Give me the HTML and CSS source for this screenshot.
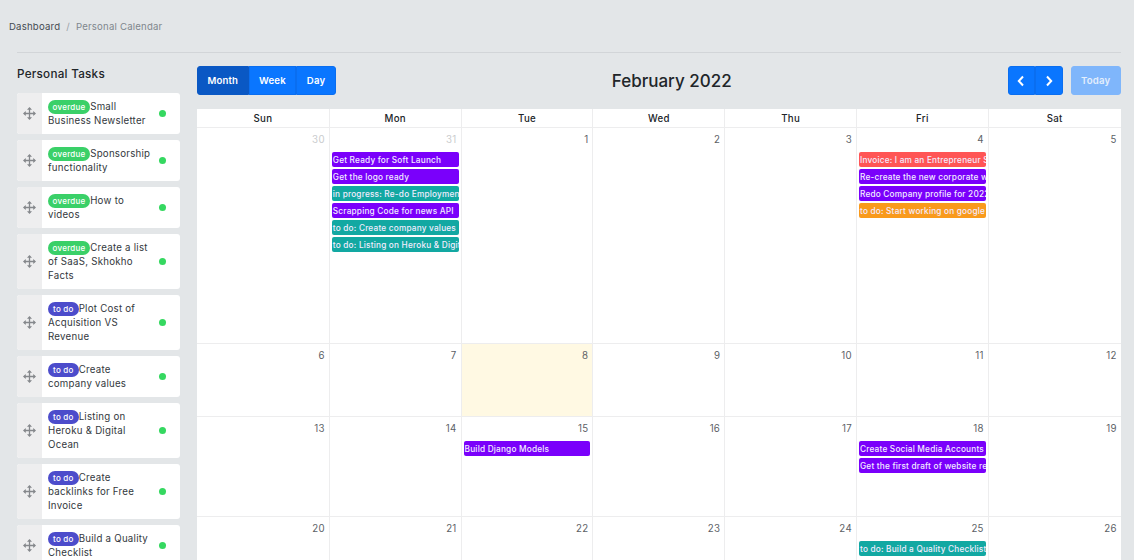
FILE: index.html
```html
<!DOCTYPE html>
<html>
<head>
  <title>Personal Calendar</title>
  <link rel="stylesheet" href="styles.css">
</head>
<body>
  <svg class="defs" width="0" height="0">
    <symbol id="move" viewBox="0 0 14 14">
      <path d="M7 1v12M1 7h12" fill="none" stroke="currentColor" stroke-width="1.4"/>
      <path d="M7 0l2.7 3H4.3zM7 14l2.7-3H4.3zM0 7l3-2.7v5.4zM14 7l-3-2.7v5.4z" fill="currentColor"/>
    </symbol>
  </svg>

  <nav class="breadcrumb">
    <a href="#">Dashboard</a>
    <span class="sep">/</span>
    <span class="current">Personal Calendar</span>
  </nav>

  <div class="content">
    <hr>
    <div class="columns">
      <aside class="tasks">
        <h2>Personal Tasks</h2>

        <div class="task">
          <div class="handle"><svg><use href="#move"/></svg></div>
          <div class="task-text"><span class="badge overdue">overdue</span>Small Business Newsletter</div>
          <span class="dot"></span>
        </div>
        <div class="task">
          <div class="handle"><svg><use href="#move"/></svg></div>
          <div class="task-text"><span class="badge overdue">overdue</span>Sponsorship functionality</div>
          <span class="dot"></span>
        </div>
        <div class="task">
          <div class="handle"><svg><use href="#move"/></svg></div>
          <div class="task-text"><span class="badge overdue">overdue</span>How to videos</div>
          <span class="dot"></span>
        </div>
        <div class="task">
          <div class="handle"><svg><use href="#move"/></svg></div>
          <div class="task-text"><span class="badge overdue">overdue</span>Create a list of SaaS, Skhokho Facts</div>
          <span class="dot"></span>
        </div>
        <div class="task">
          <div class="handle"><svg><use href="#move"/></svg></div>
          <div class="task-text"><span class="badge todo">to do</span>Plot Cost of Acquisition VS Revenue</div>
          <span class="dot"></span>
        </div>
        <div class="task">
          <div class="handle"><svg><use href="#move"/></svg></div>
          <div class="task-text"><span class="badge todo">to do</span>Create company values</div>
          <span class="dot"></span>
        </div>
        <div class="task">
          <div class="handle"><svg><use href="#move"/></svg></div>
          <div class="task-text"><span class="badge todo">to do</span>Listing on Heroku &amp; Digital Ocean</div>
          <span class="dot"></span>
        </div>
        <div class="task">
          <div class="handle"><svg><use href="#move"/></svg></div>
          <div class="task-text"><span class="badge todo">to do</span>Create backlinks for Free Invoice</div>
          <span class="dot"></span>
        </div>
        <div class="task">
          <div class="handle"><svg><use href="#move"/></svg></div>
          <div class="task-text"><span class="badge todo">to do</span>Build a Quality Checklist</div>
          <span class="dot"></span>
        </div>
      </aside>

      <main class="calendar">
        <div class="toolbar">
          <div class="btn-group">
            <button class="btn active">Month</button>
            <button class="btn">Week</button>
            <button class="btn">Day</button>
          </div>
          <h1>February 2022</h1>
          <div class="toolbar-right">
            <div class="btn-group">
              <button class="btn arrow"><svg width="8" height="12" viewBox="0 0 8 12"><path d="M6 1.5L1.8 6 6 10.5" fill="none" stroke="#fff" stroke-width="2"/></svg></button>
              <button class="btn arrow"><svg width="8" height="12" viewBox="0 0 8 12"><path d="M2 1.5L6.2 6 2 10.5" fill="none" stroke="#fff" stroke-width="2"/></svg></button>
            </div>
            <button class="btn today">Today</button>
          </div>
        </div>

        <div class="month">
          <div class="head">Sun</div>
          <div class="head">Mon</div>
          <div class="head">Tue</div>
          <div class="head">Wed</div>
          <div class="head">Thu</div>
          <div class="head">Fri</div>
          <div class="head">Sat</div>

          <div class="day other"><span class="num">30</span></div>
          <div class="day other"><span class="num">31</span>
            <a class="event purple">Get Ready for Soft Launch</a>
            <a class="event purple">Get the logo ready</a>
            <a class="event teal">in progress: Re-do Employment Contract</a>
            <a class="event purple">Scrapping Code for news API</a>
            <a class="event teal">to do: Create company values</a>
            <a class="event teal">to do: Listing on Heroku &amp; Digital Ocean</a>
          </div>
          <div class="day"><span class="num">1</span></div>
          <div class="day"><span class="num">2</span></div>
          <div class="day"><span class="num">3</span></div>
          <div class="day"><span class="num">4</span>
            <a class="event red">Invoice: I am an Entrepreneur Series</a>
            <a class="event purple">Re-create the new corporate website</a>
            <a class="event purple">Redo Company profile for 2022</a>
            <a class="event orange">to do: Start working on google ads</a>
          </div>
          <div class="day"><span class="num">5</span></div>

          <div class="day"><span class="num">6</span></div>
          <div class="day"><span class="num">7</span></div>
          <div class="day now"><span class="num">8</span></div>
          <div class="day"><span class="num">9</span></div>
          <div class="day"><span class="num">10</span></div>
          <div class="day"><span class="num">11</span></div>
          <div class="day"><span class="num">12</span></div>

          <div class="day"><span class="num">13</span></div>
          <div class="day"><span class="num">14</span></div>
          <div class="day"><span class="num">15</span>
            <a class="event purple">Build Django Models</a>
          </div>
          <div class="day"><span class="num">16</span></div>
          <div class="day"><span class="num">17</span></div>
          <div class="day"><span class="num">18</span>
            <a class="event purple">Create Social Media Accounts</a>
            <a class="event purple">Get the first draft of website ready</a>
          </div>
          <div class="day"><span class="num">19</span></div>

          <div class="day"><span class="num">20</span></div>
          <div class="day"><span class="num">21</span></div>
          <div class="day"><span class="num">22</span></div>
          <div class="day"><span class="num">23</span></div>
          <div class="day"><span class="num">24</span></div>
          <div class="day"><span class="num">25</span>
            <a class="event teal">to do: Build a Quality Checklist</a>
          </div>
          <div class="day"><span class="num">26</span></div>
        </div>
      </main>
    </div>
  </div>
</body>
</html>
```

FILE: styles.css
```css
html, body {
  height: 100%;
  overflow: hidden;
}
body {
  margin: 0;
  background: #e3e6e8;
  font-family: Inter, "Noto Sans", sans-serif;
  color: #2b2f33;
}
.defs {
  position: absolute;
}
.breadcrumb {
  height: 52px;
  padding-left: 9px;
  display: flex;
  align-items: center;
  gap: 6px;
  font-size: 9.6px;
  letter-spacing: 0.2px;
}
.breadcrumb a {
  color: #444b52;
  text-decoration: none;
}
.breadcrumb .sep {
  color: #9aa1a8;
}
.breadcrumb .current {
  color: #7f868d;
}
.content {
  padding: 0 13.3px 0 17px;
}
hr {
  margin: 0;
  border: 0;
  border-top: 1px solid #d2d5d8;
}
.columns {
  display: flex;
  gap: 17px;
  padding-top: 13px;
}

/* task list */
.tasks {
  width: 163px;
  flex: none;
}
.tasks h2 {
  margin: 0 0 11px;
  font-size: 11.7px;
  line-height: 16px;
  font-weight: 500;
  letter-spacing: 0.25px;
  color: #212529;
}
.task {
  display: flex;
  align-items: center;
  margin-bottom: 6px;
  background: #fff;
  border-radius: 3px;
  overflow: hidden;
}
.handle {
  width: 25px;
  align-self: stretch;
  flex: none;
  display: flex;
  align-items: center;
  justify-content: center;
  background: #eeeeef;
  color: #85888c;
}
.handle svg {
  width: 13px;
  height: 13px;
}
.task-text {
  flex: 1;
  padding: 6.5px 0 6.5px 6px;
  font-size: 9.7px;
  line-height: 14px;
  letter-spacing: 0.25px;
  color: #33383d;
}
.badge {
  display: inline-block;
  height: 14px;
  padding: 0 5px;
  border-radius: 7px;
  color: #fff;
  font-size: 8px;
  line-height: 14px;
  font-weight: 500;
  vertical-align: top;
}
.badge.overdue {
  padding: 0 4.6px;
  background: #3ad068;
}
.badge.todo {
  background: #4c4ccb;
}
.dot {
  width: 7px;
  height: 7px;
  margin: 0 14px 0 5px;
  border-radius: 50%;
  flex: none;
  background: #35d860;
}

/* calendar */
.calendar {
  flex: 1;
  min-width: 0;
}
.toolbar {
  display: flex;
  align-items: center;
  justify-content: space-between;
  height: 29px;
  margin-bottom: 14px;
}
.toolbar h1 {
  margin: 0;
  font-size: 17px;
  font-weight: 500;
  color: #212529;
}
.toolbar-right {
  display: flex;
  gap: 8px;
}
.btn-group {
  display: flex;
}
.btn {
  height: 29px;
  padding: 0 9.5px;
  border: 1px solid #0a6ef0;
  border-radius: 0;
  background: #0a76ff;
  color: #fff;
  font: 600 9.6px Inter, sans-serif;
  letter-spacing: 0.15px;
}
.btn-group .btn:first-child {
  border-radius: 3px 0 0 3px;
}
.btn-group .btn:last-child {
  border-radius: 0 3px 3px 0;
}
.btn.active {
  background: #0a58c4;
  border-color: #0a58c4;
}
.btn.arrow {
  width: 27.5px;
  padding: 0;
}
.btn.arrow svg {
  display: block;
  margin: auto;
}
.btn.today {
  width: 50px;
  padding: 0;
  border-color: #7fb6fb;
  border-radius: 3px;
  background: #7fb6fb;
  color: #e3eefc;
}
.month {
  display: grid;
  grid-template-columns: repeat(6, 131.8px) 1fr;
  grid-template-rows: 19px 216px 73px 100px 120px;
  background: #fff;
  font-size: 9.7px;
}
.head {
  text-align: center;
  font-weight: 500;
  line-height: 20px;
  letter-spacing: 0.3px;
  color: #212529;
  border-left: 1px solid #ededee;
  border-bottom: 1px solid #ededee;
}
.day {
  min-width: 0;
  padding: 0 1px;
  border-left: 1px solid #ededee;
  border-bottom: 1px solid #ededee;
}
.head:nth-child(7n+1), .day:nth-child(7n+1) {
  border-left: 0;
}
.day.now {
  background: #fff9e3;
}
.num {
  display: block;
  padding: 5px 3px 0 0;
  height: 24px;
  box-sizing: border-box;
  text-align: right;
  line-height: 13px;
  letter-spacing: 0.3px;
  color: #5c6166;
}
.other .num {
  color: #c9cbcd;
}
.event {
  display: block;
  height: 15px;
  margin: 0 1px 2px 1px;
  padding-left: 1px;
  border-radius: 2px;
  overflow: hidden;
  white-space: nowrap;
  color: #f2ecff;
  font-size: 8.25px;
  font-weight: 500;
  line-height: 16px;
  letter-spacing: 0.2px;
}
.event.purple {
  background: #7a00fb;
}
.event.teal {
  background: #12a8a2;
}
.event.red {
  background: #ff5555;
}
.event.orange {
  background: #f99a1c;
}
```
